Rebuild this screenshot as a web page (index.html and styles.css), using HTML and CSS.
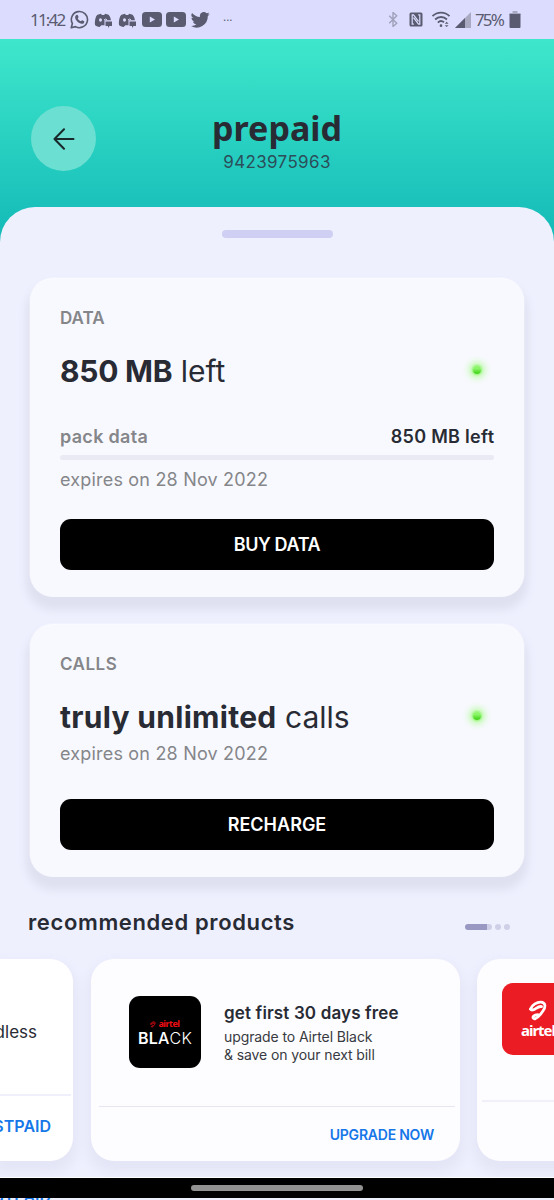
FILE: index.html
```html
<!DOCTYPE html>
<html lang="en">
<head>
<meta charset="utf-8">
<title>prepaid</title>
<link rel="stylesheet" href="styles.css">
</head>
<body>
<svg width="0" height="0" class="defs">
  <symbol id="discord" viewBox="0 0 18 18"><path d="M1 14C.6 8.500 2 5 3.500 3.800L7 2.700l.9 1.200h2.300l.9-1.200 3.500 1.100c1.200 1.500 2.200 3.500 2.300 5.500H10.500v5H7.500L5.500 16C3.500 15.800 2 15 1 14Z" fill="currentColor"/><ellipse cx="6.500" cy="9" rx="1.500" ry="1.700" fill="#dcddfe"/><path d="M10 9q2-2 3 0" stroke="#dcddfe" fill="none"/><path d="M11.500 10.500H18V15h-2.500L14 17v-2h-2.500z" fill="currentColor"/></symbol>
  <symbol id="youtube" viewBox="0 0 20 15"><rect width="20" height="15" rx="3.500" fill="currentColor"/><path d="M7.800 4.500v6l5.200-3z" fill="#dcddfe"/></symbol>
  <symbol id="swirl" viewBox="0 0 20 22"><path d="M2 9.500C4 5 9 2 13 2.200c5 .3 5.200 4.800 2.500 8.800C13 15 9.800 18.300 7.300 19.500c-2 .8-3.200-1-2-2.500 1.200-1.400 3-1.800 4.500-1.800M2 9.500c1.200 1.800 3.700.8 6-.8 1.800-1.200 4-2.200 5.700-1.800" fill="none" stroke="currentColor" stroke-width="2.900" stroke-linecap="round" stroke-linejoin="round"/></symbol>
</svg>
<div class="screen">
  <div class="status">
    <div class="status-left">
      <span class="clock">11:42</span>
      <svg class="i-wa" viewBox="0 0 20 20"><path d="M1.300 18.700l1.200-4.500A8.500 8.500 0 1 1 5.800 17.500z" fill="none" stroke="currentColor" stroke-width="1.700" stroke-linejoin="round"/><path d="M6.800 5.300c.8-.4 1.300-.2 1.600.6l.6 1.500c.1.500-.9 1.300-.8 1.600.8 1.500 1.800 2.300 3.200 2.900.4.100 1-1.200 1.500-1l2 1c.5.300-.1 1.800-.7 2.200-3.600 1.900-9.700-3.700-8.700-7.300.2-.7.800-1.300 1.300-1.500z" fill="currentColor"/></svg>
      <svg class="i-dc"><use href="#discord"/></svg>
      <svg class="i-dc"><use href="#discord"/></svg>
      <svg class="i-yt"><use href="#youtube"/></svg>
      <svg class="i-yt"><use href="#youtube"/></svg>
      <svg class="i-tw" viewBox="0 0 24 20"><path d="M23.600 2.300c-.9.400-1.800.7-2.800.8 1-.6 1.800-1.600 2.100-2.700-.9.600-2 1-3.100 1.200a4.900 4.900 0 0 0-8.400 4.500C7.300 5.900 3.700 4 1.300 1a4.900 4.900 0 0 0 1.500 6.600c-.8 0-1.600-.2-2.200-.6 0 2.400 1.700 4.400 3.900 4.900-.7.200-1.500.2-2.200.1.600 2 2.400 3.400 4.600 3.400A9.900 9.900 0 0 1 0 17.500 14 14 0 0 0 21.200 5.100c1-.7 1.800-1.600 2.400-2.800z" fill="currentColor"/></svg>
      <span class="more">···</span>
    </div>
    <div class="status-right">
      <svg class="i-bt" viewBox="0 0 10 16"><path d="M1 4l8 8-4 3.500V.5L9 4l-8 8" fill="none" stroke="currentColor" stroke-width="1.500"/></svg>
      <svg class="i-nfc" viewBox="0 0 14 15"><rect x=".5" y=".5" width="13" height="14" rx="1.500" fill="currentColor"/><path d="M4.800 12.200H3.200V2.800h1.300l5 6.500M9.200 2.800h1.600v9.400H9.500l-5-6.500" fill="none" stroke="#dcddfe" stroke-width="1.200"/></svg>
      <svg class="i-wifi" viewBox="0 0 20 18"><path d="M1 5.500C6 .4 14 .4 19 5.500M3.800 9c3.500-3.500 9-3.500 12.500 0M6.700 12.300c2-2 4.500-2 6.500-.3" fill="none" stroke="currentColor" stroke-width="2"/><circle cx="10" cy="15.500" r="1.400" fill="currentColor"/><path d="M14 13.500l2-2 2 2zM14 15l2 2 2-2z" fill="currentColor"/></svg>
      <svg class="i-sig" viewBox="0 0 16 16"><path d="M16 0v16H0z" fill="#a9aac2"/><path d="M10 6v10H0z" fill="currentColor"/></svg>
      <span class="pct">75%</span>
      <svg class="i-bat" viewBox="0 0 11 17"><path d="M3 0h5v2h3v2H0V2h3z" fill="#a9aac2"/><path d="M0 3h11v13a1 1 0 0 1-1 1H1a1 1 0 0 1-1-1z" fill="currentColor"/></svg>
    </div>
  </div>
  <header class="header">
    <div class="back"><svg viewBox="0 0 22 22"><path d="M20.500 11H1.500M11 1.200L1.500 11l9.500 9.800" fill="none" stroke="currentColor" stroke-width="2" stroke-linecap="round" stroke-linejoin="round"/></svg></div>
    <div class="titles">
      <h1 class="title">prepaid</h1>
      <div class="number">9423975963</div>
    </div>
  </header>
  <main class="sheet">
    <div class="handle"></div>
    <section class="card">
      <div class="label">DATA</div>
      <div class="main-row"><div class="big big-data"><b>850 MB</b> left</div><i class="led"></i></div>
      <div class="pack"><span class="pack-name">pack data</span><span class="pack-left">850 MB left</span></div>
      <div class="bar"></div>
      <div class="expires">expires on 28 Nov 2022</div>
      <div class="button button-buy">BUY DATA</div>
    </section>
    <section class="card card-calls">
      <div class="label label-calls">CALLS</div>
      <div class="main-row"><div class="big big-calls"><b>truly unlimited</b> calls</div><i class="led"></i></div>
      <div class="expires">expires on 28 Nov 2022</div>
      <div class="button">RECHARGE</div>
    </section>
    <div class="section-head">
      <h2 class="rec">recommended products</h2>
      <div class="dots"><i class="dot-active"></i><i class="dot"></i><i class="dot"></i></div>
    </div>
    <div class="carousel">
      <article class="offer offer-first"><div class="offer-top"><span class="endless">endless</span></div><div class="offer-foot"><span class="postpaid">POSTPAID</span></div></article>
      <article class="offer offer-mid">
        <div class="offer-body">
          <div class="logo-black"><div class="brand-row"><svg class="swirl-small"><use href="#swirl"/></svg><span class="brand-red">airtel</span></div><div class="black-word">BL<span class="w-mid">A</span><span class="w-thin">CK</span></div></div>
          <div class="offer-text"><div class="offer-title">get first 30 days free</div><div class="offer-sub offer-line1">upgrade to Airtel Black</div><div class="offer-sub">&amp; save on your next bill</div></div>
        </div>
        <div class="upgrade-row"><span class="upgrade">UPGRADE NOW</span></div>
      </article>
      <article class="offer offer-last"><div class="offer-red"><div class="logo-red"><svg class="swirl-big"><use href="#swirl"/></svg><span>airtel</span></div></div></article>
    </div>
  </main>
  <footer class="nav"><div class="pill"></div></footer>
  <div class="under"><span class="under-text">POSTPAID</span></div>
</div>
</body>
</html>
```
FILE: styles.css
```css
* { box-sizing: border-box; }
body { margin: 0; font-family: Inter, "Noto Sans", sans-serif; color: #282b34; }
svg { display: block; flex: none; }
.defs { position: absolute; }
.screen { width: 554px; height: 1200px; overflow: hidden; display: flex; flex-direction: column; background: linear-gradient(#3ee7cb 39px, #12b9b7 245px); }
.status { height: 39px; flex: none; background: #dcddfe; color: #5a5b70; display: flex; justify-content: space-between; padding: 0 33px 0 30px; }
.status-left, .status-right { display: flex; align-items: center; }
.clock { width: 40px; font: 17px/38px "Noto Sans", sans-serif; letter-spacing: -1.8px; white-space: nowrap; }
.i-wa { width: 19px; height: 19px; margin-right: 5px; }
.i-dc { width: 18px; height: 18px; margin-right: 6px; }
.i-yt { width: 20px; height: 15px; margin-right: 4px; }
.i-tw { width: 19px; height: 16px; margin-left: 1px; }
.more { margin-left: 13px; font-size: 11px; }
.i-bt { width: 10px; height: 15px; color: #a0a1bb; margin-right: 11px; }
.i-nfc { width: 14px; height: 15px; margin-right: 8px; }
.i-wifi { width: 20px; height: 17px; margin-right: 4px; }
.i-sig { width: 16px; height: 16px; margin-right: 4px; }
.pct { width: 34px; font: 17px/38px "Noto Sans", sans-serif; letter-spacing: -1.9px; white-space: nowrap; }
.i-bat { width: 12px; height: 17px; }
.header { height: 168px; flex: none; display: grid; grid-template-columns: 65px 1fr 65px; padding: 67px 31px 0; }
.back { width: 65px; height: 65px; border-radius: 50%; background: #6bdfd1; display: grid; place-items: center; color: #18282b; }
.back svg { width: 22px; height: 22px; }
.titles { text-align: center; }
.title { margin: 2px 0 0; font: 700 34px/40px "Noto Sans", sans-serif; }
.number { margin-top: 2px; font-size: 17px; line-height: 24px; color: #2b4e59; letter-spacing: .35px; }
.sheet { flex: 1; min-height: 0; border-radius: 35px 35px 0 0; background: #eef0fe; padding: 23px 0 0; overflow: hidden; border-bottom: 1px solid #fff; }
.handle { width: 111px; height: 8px; margin: 0 auto 41px; border-radius: 4px; background: #cfcff3; }
.card { width: 494px; height: 318px; margin: 0 30px; padding: 28px 30px 27px; border-radius: 23px; background: #f8f9fe; box-shadow: 0 -1px 2px #fff, 0 9px 8px 4px #dfe0f0; }
.card-calls { height: 252px; margin-top: 28px; }
.label { font-size: 17px; font-weight: 600; line-height: 22px; color: #85868a; }
.label-calls { letter-spacing: .5px; }
.main-row { display: flex; align-items: center; justify-content: space-between; height: 36px; margin-top: 24px; }
.big { font-size: 30px; line-height: 36px; white-space: nowrap; }
.big b { font-weight: 700; }
.big-data b { letter-spacing: -.25px; }
.big-calls b { letter-spacing: .3px; }
.led { width: 8px; height: 8px; margin: 0 13px 2px 0; border-radius: 50%; background: linear-gradient(#8cf56a 30%, #43d51b 90%); box-shadow: 0 0 2px 1px #8df56c, 0 0 7px 4px #b9fba5; }
.pack { display: flex; justify-content: space-between; margin-top: 36px; line-height: 24px; font-size: 18px; font-weight: 600; letter-spacing: .3px; }
.pack-left { margin-right: -.3px; }
.pack-name { color: #85868a; }
.bar { height: 5px; margin-top: 6px; border-radius: 3px; background: #e9eaf4; }
.expires { margin-top: 8px; font-size: 18px; line-height: 24px; letter-spacing: .19px; color: #85868a; }
.button { height: 51px; margin-top: 27px; border-radius: 11px; background: #000; color: #fff; font-size: 18px; font-weight: 600; line-height: 51px; text-align: center; }
.button-buy { letter-spacing: -.4px; }
.card-calls .expires { margin-top: 7px; }
.card-calls .button { margin-top: 33px; }
.section-head { display: flex; justify-content: space-between; align-items: center; height: 28px; margin: 31px 44px 23px 28px; }
.rec { margin: 0; font-size: 22px; font-weight: 600; line-height: 28px; letter-spacing: .62px; }
.dots { display: flex; gap: 3px; margin-top: 10px; }
.dot-active { width: 27px; height: 6px; border-radius: 3px; background: linear-gradient(90deg, #9998c2 22px, #cfcfe7 22px); }
.dot { width: 6px; height: 6px; border-radius: 50%; background: #cfcfe7; }
.carousel { display: flex; }
.offer { flex: none; height: 202px; border-radius: 23px; background: #fdfdff; box-shadow: 0 8px 12px 4px #e4e5f6; }
.offer-first { width: 73px; border-radius: 0 23px 23px 0; background: #fff; margin-right: 18px; }
.offer-top { height: 137px; display: flex; justify-content: flex-end; width: 71px; padding: 61px 34px 0 0; border-bottom: 2px solid #eff0fc; font-size: 17px; line-height: 24px; }
.offer-foot { display: flex; justify-content: flex-end; padding: 19px 22px 0 0; color: #1677e9; font-size: 16px; font-weight: 600; line-height: 22px; }
.offer-mid { width: 369px; margin-right: 17px; }
.offer-body { height: 148px; margin: 0 5px 0 8px; padding: 37px 0 0 30px; border-bottom: 1px solid #e5e6f2; display: flex; gap: 23px; }
.logo-black { width: 72px; height: 72px; flex: none; border-radius: 11px; background: #000; color: #fff; padding-top: 21px; }
.brand-row { display: flex; justify-content: center; align-items: center; gap: 2px; height: 14px; color: #f00d14; }
.swirl-small { width: 6px; height: 7px; }
.brand-red { font: 700 9px/14px "Noto Sans", sans-serif; letter-spacing: -.5px; }
.black-word { font-size: 16px; font-weight: 600; line-height: 14px; text-align: center; letter-spacing: .2px; }
.w-mid { font-weight: 500; }
.w-thin { font-weight: 300; }
.offer-text { padding-top: 5px; white-space: nowrap; }
.offer-title { font-size: 17px; font-weight: 600; line-height: 24px; letter-spacing: .14px; }
.offer-sub { font-size: 14px; line-height: 18px; letter-spacing: -.1px; color: #383a41; }
.offer-line1 { padding-top: 3px; }
.upgrade-row { display: flex; justify-content: flex-end; padding: 17px 26px 0 0; color: #1677e9; font-size: 14px; font-weight: 600; line-height: 22px; letter-spacing: -.22px; }
.offer-last { width: 369px; }
.offer-red { height: 143px; margin: 0 5px; padding: 24px 0 0 20px; border-bottom: 2px solid #eff0fa; }
.logo-red { width: 72px; height: 72px; border-radius: 11px; background: #ec1c24; color: #fff; padding-top: 17px; text-align: center; font: 700 15px/18px "Noto Sans", sans-serif; letter-spacing: -1px; }
.swirl-big { width: 20px; height: 21px; margin: 0 auto; }
.nav { height: 20px; flex: none; background: #000; display: grid; place-items: center; }
.pill { width: 172px; height: 6px; border-radius: 3px; background: #929292; }
.under { height: 2px; flex: none; background: #eef0fe; overflow: hidden; }
.under-text { display: block; width: 51px; margin-top: -12px; direction: rtl; color: #1677e9; font-size: 16px; font-weight: 600; line-height: 20px; }
```
